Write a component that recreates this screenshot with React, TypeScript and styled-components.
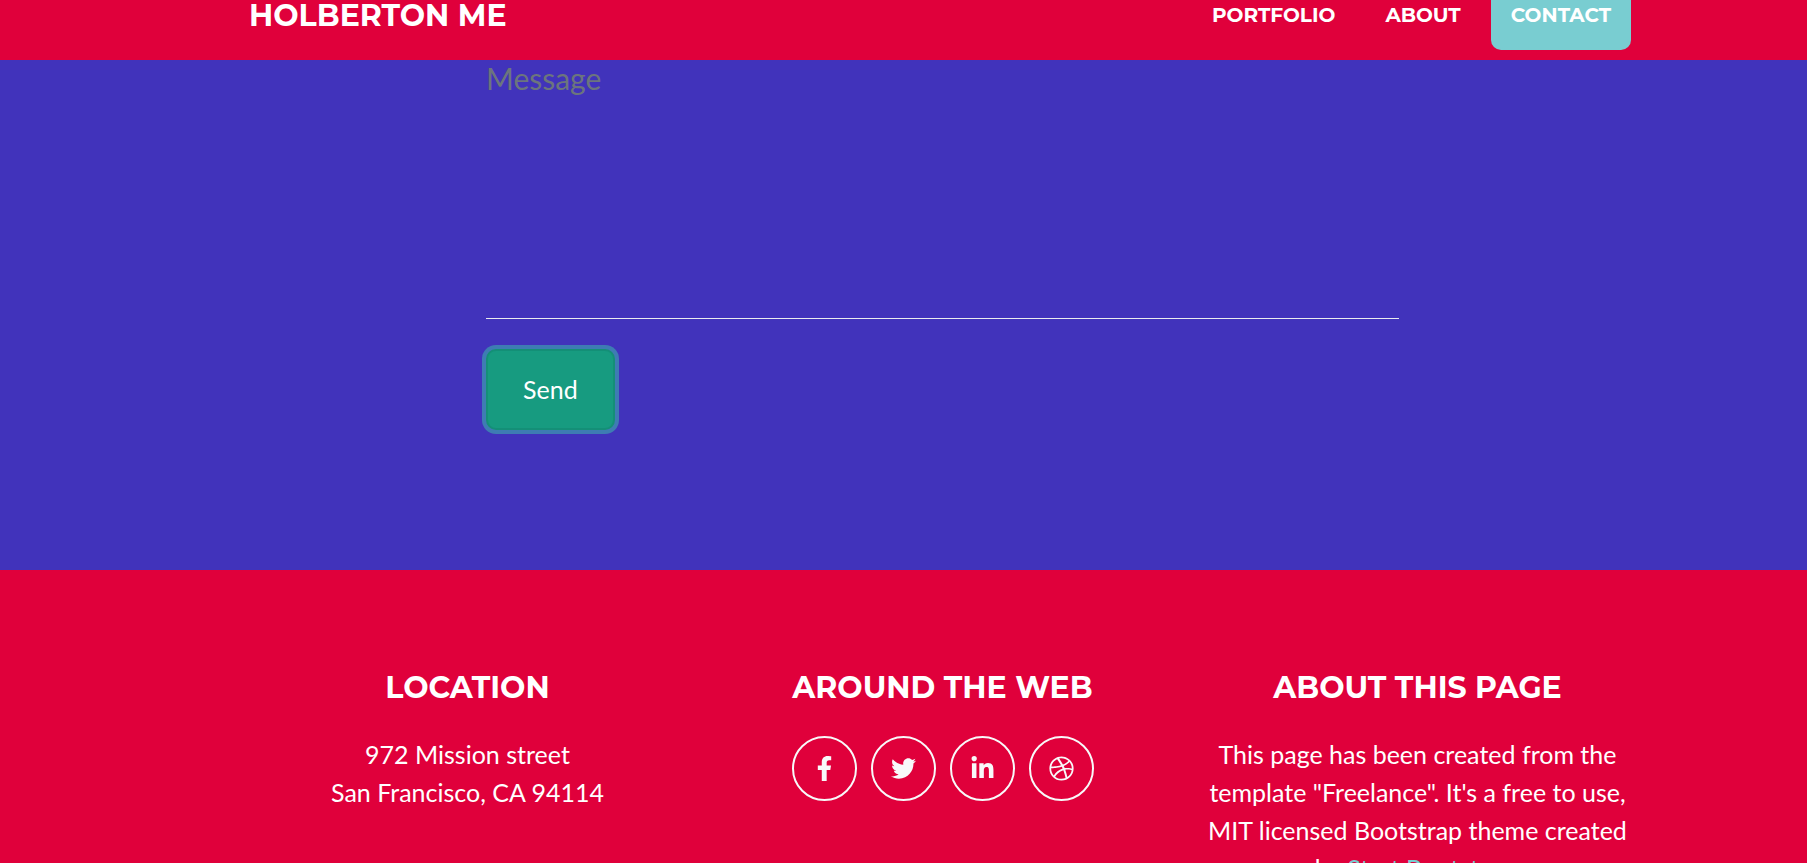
import React from "react";
import styled, { createGlobalStyle } from "styled-components";
import { FaDribbble, FaFacebookF, FaLinkedinIn, FaTwitter } from "react-icons/fa";

const red = "#e0003b";
const indigo = "#4133bb";
const teal = "#79cdd1";
const heading = `Montserrat, Inter, "Open Sans", sans-serif`;

const GlobalStyle = createGlobalStyle`
  *, *::before, *::after { box-sizing: border-box; }
  body {
    margin: 0;
    background: ${red};
    color: #fff;
    font-family: Lato, "Open Sans", sans-serif;
    font-size: 25px;
    line-height: 38px;
  }
`;

const Page = styled.div`
  height: 100vh;
  overflow: hidden;
`;

const Container = styled.div`
  width: 100%;
  max-width: 1425px;
  margin: 0 auto;
  padding: 0 19px;
`;

const NavBar = styled.header`
  height: 60px;
  overflow: hidden;
  padding-left: 78px;
  background: ${red};
`;

const NavInner = styled(Container)`
  display: flex;
  align-items: flex-end;
  justify-content: space-between;
  height: 50px;
`;

const Brand = styled.a`
  font: 700 30px/68px ${heading};
  color: #fff;
  text-decoration: none;
`;

const NavLinks = styled.nav`
  display: flex;
  gap: 10px;
  padding-right: 5px;
`;

const NavLink = styled.a<{ $active?: boolean }>`
  padding: 0 20px;
  border-radius: 10px;
  background: ${({ $active }) => ($active ? teal : "transparent")};
  font: 700 20px/70px ${heading};
  color: #fff;
  text-decoration: none;
`;

const ContactSection = styled.main`
  padding: 0 0 140px 78px;
  background: ${indigo};
`;

const Form = styled.form`
  width: 64%;
  min-width: 300px;
  max-width: 913px;
  margin: 0 auto;
`;

const MessageBox = styled.textarea`
  display: block;
  width: 100%;
  height: 259px;
  margin: 0 0 30px;
  padding: 0;
  border: 0;
  border-bottom: 1px solid #e9ecef;
  background: transparent;
  color: #fff;
  font: 30px/36px Lato, "Open Sans", sans-serif;
  resize: none;
  outline: none;

  &::placeholder {
    color: #6c757d;
    opacity: 1;
  }
`;

const SendButton = styled.button`
  display: block;
  padding: 20px 35px;
  border: 2px solid #148f77;
  border-radius: 10px;
  background: #179b80;
  box-shadow: 0 0 0 4px rgba(60, 198, 171, 0.5);
  color: #fff;
  font: 25px/37px Lato, "Open Sans", sans-serif;
`;

const Footer = styled.footer`
  padding: 100px 0 100px 78px;
  background: ${red};
  text-align: center;
`;

const FooterColumns = styled(Container)`
  display: grid;
  grid-template-columns: repeat(3, minmax(0, 1fr));
  padding: 0;
`;

const FooterColumn = styled.section`
  padding: 0 18px;
`;

const FooterTitle = styled.h2`
  margin: 0 0 29px;
  font: 700 30px/36px ${heading};
`;

const FooterText = styled.p`
  margin: 0;
`;

const TextLink = styled.a`
  color: ${teal};
  text-decoration: none;
`;

const SocialLinks = styled.div`
  display: flex;
  justify-content: center;
  gap: 14px;
  padding-top: 1px;
`;

const SocialLink = styled.a`
  display: flex;
  align-items: center;
  justify-content: center;
  width: 65px;
  height: 65px;
  border: 2px solid #f8f9fa;
  border-radius: 50%;
  color: #f8f9fa;
`;

const socials = [
  { name: "Facebook", Icon: FaFacebookF },
  { name: "Twitter", Icon: FaTwitter },
  { name: "LinkedIn", Icon: FaLinkedinIn },
  { name: "Dribbble", Icon: FaDribbble },
];

export default function App() {
  return (
    <Page>
      <GlobalStyle />
      <NavBar>
        <NavInner>
          <Brand href="#top">HOLBERTON ME</Brand>
          <NavLinks>
            <NavLink href="#portfolio">PORTFOLIO</NavLink>
            <NavLink href="#about">ABOUT</NavLink>
            <NavLink href="#contact" $active>CONTACT</NavLink>
          </NavLinks>
        </NavInner>
      </NavBar>
      <ContactSection id="contact">
        <Form onSubmit={(event) => event.preventDefault()}>
          <MessageBox aria-label="Message" placeholder="Message" />
          <SendButton type="submit">Send</SendButton>
        </Form>
      </ContactSection>
      <Footer>
        <FooterColumns>
          <FooterColumn>
            <FooterTitle>LOCATION</FooterTitle>
            <FooterText>
              972 Mission street
              <br />
              San Francisco, CA 94114
            </FooterText>
          </FooterColumn>
          <FooterColumn>
            <FooterTitle>AROUND THE WEB</FooterTitle>
            <SocialLinks>
              {socials.map(({ name, Icon }) => (
                <SocialLink key={name} href={`#${name.toLowerCase()}`} aria-label={name}>
                  <Icon size={25} />
                </SocialLink>
              ))}
            </SocialLinks>
          </FooterColumn>
          <FooterColumn>
            <FooterTitle>ABOUT THIS PAGE</FooterTitle>
            <FooterText>
              This page has been created from the template "Freelance". It's a free to use, MIT
              licensed Bootstrap theme created by <TextLink href="#start-bootstrap">Start Bootstrap</TextLink>.
            </FooterText>
          </FooterColumn>
        </FooterColumns>
      </Footer>
    </Page>
  );
}
